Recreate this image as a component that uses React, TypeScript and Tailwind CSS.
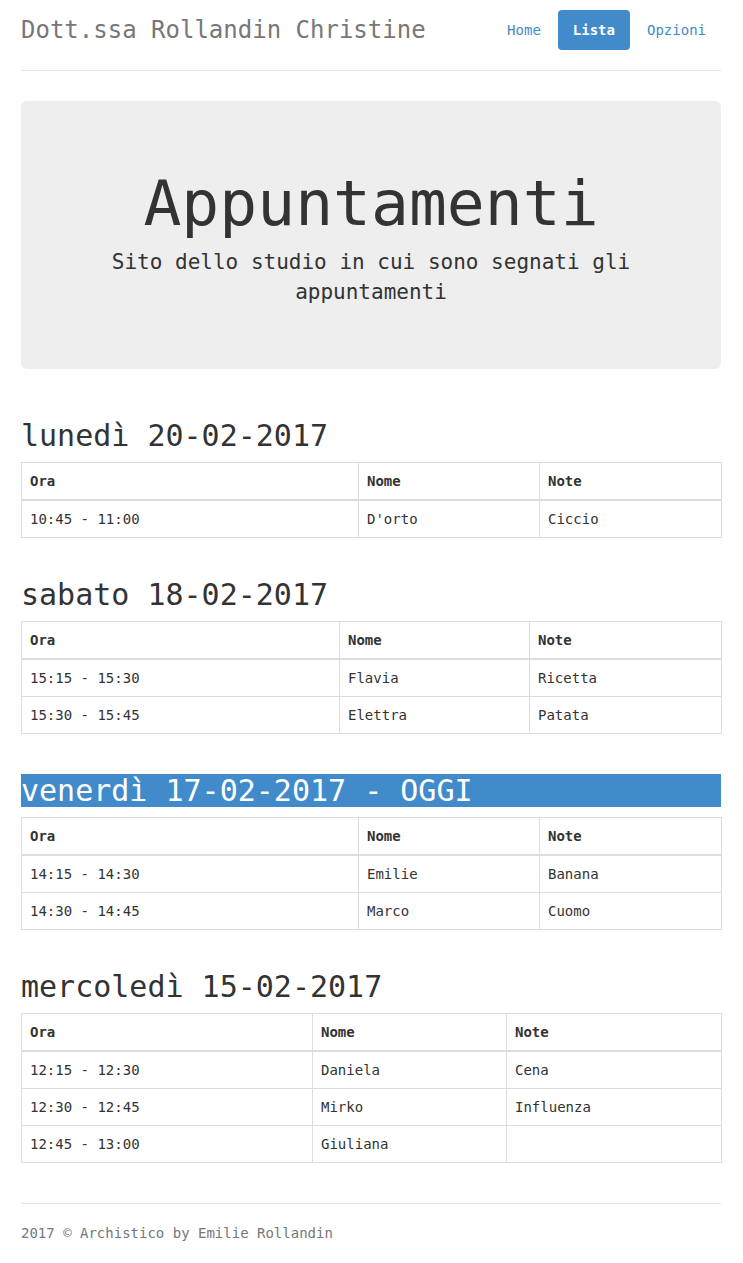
import React from 'react';

type Row = { ora: string; nome: string; note: string };

interface Giorno {
  titolo: string;
  oggi?: boolean;
  cols: [string, string, string];
  righe: Row[];
}

const giorni: Giorno[] = [
  {
    titolo: 'lunedì 20-02-2017',
    cols: ['w-[337px]', 'w-[181px]', 'w-[182px]'],
    righe: [{ ora: '10:45 - 11:00', nome: "D'orto", note: 'Ciccio' }],
  },
  {
    titolo: 'sabato 18-02-2017',
    cols: ['w-[318px]', 'w-[190px]', 'w-[192px]'],
    righe: [
      { ora: '15:15 - 15:30', nome: 'Flavia', note: 'Ricetta' },
      { ora: '15:30 - 15:45', nome: 'Elettra', note: 'Patata' },
    ],
  },
  {
    titolo: 'venerdì 17-02-2017 - OGGI',
    oggi: true,
    cols: ['w-[337px]', 'w-[181px]', 'w-[182px]'],
    righe: [
      { ora: '14:15 - 14:30', nome: 'Emilie', note: 'Banana' },
      { ora: '14:30 - 14:45', nome: 'Marco', note: 'Cuomo' },
    ],
  },
  {
    titolo: 'mercoledì 15-02-2017',
    cols: ['w-[291px]', 'w-[194px]', 'w-[215px]'],
    righe: [
      { ora: '12:15 - 12:30', nome: 'Daniela', note: 'Cena' },
      { ora: '12:30 - 12:45', nome: 'Mirko', note: 'Influenza' },
      { ora: '12:45 - 13:00', nome: 'Giuliana', note: '' },
    ],
  },
];

const Tabella: React.FC<{ giorno: Giorno }> = ({ giorno }) => (
  <section className="flex flex-col pt-5 pb-5">
    <h2
      className={`mb-[10px] text-[30px] leading-[33px] font-medium ${
        giorno.oggi ? 'bg-[#428bca] text-white' : 'text-[#333]'
      }`}
    >
      {giorno.titolo}
    </h2>
    <table className="w-full table-fixed border-collapse border border-[#ddd] text-[14px] leading-5">
      <thead>
        <tr>
          {['Ora', 'Nome', 'Note'].map((h, i) => (
            <th
              key={h}
              className={`${giorno.cols[i]} p-2 text-left font-bold border border-[#ddd] border-b-2`}
            >
              {h}
            </th>
          ))}
        </tr>
      </thead>
      <tbody>
        {giorno.righe.map((r) => (
          <tr key={r.ora}>
            <td className="p-2 border border-[#ddd] h-[37px]">{r.ora}</td>
            <td className="p-2 border border-[#ddd]">{r.nome}</td>
            <td className="p-2 border border-[#ddd]">{r.note}</td>
          </tr>
        ))}
      </tbody>
    </table>
  </section>
);

export default function App() {
  return (
    <div
      className="min-h-[1263px] bg-white text-[#333]"
      style={{ fontFamily: '"DejaVu Sans Mono", "Liberation Mono", monospace' }}
    >
      <div className="w-[700px] ml-[21px] pt-[10px] flex flex-col">
        {/* header */}
        <div className="flex items-center justify-between pb-5 border-b border-[#e5e5e5]">
          <h3 className="text-[24px] leading-10 text-[#777] font-normal">Dott.ssa Rollandin Christine</h3>
          <nav className="flex gap-[2px] text-[14px] leading-5">
            <a className="px-[15px] py-[10px] rounded text-[#428bca]">Home</a>
            <a className="px-[15px] py-[10px] rounded bg-[#428bca] text-white font-bold">Lista</a>
            <a className="px-[15px] py-[10px] rounded text-[#428bca]">Opzioni</a>
          </nav>
        </div>

        {/* jumbotron */}
        <div className="mt-[30px] mb-[30px] bg-[#eeeeee] rounded-md pt-[68px] pb-[62px] px-[30px] text-center">
          <h1 className="text-[63px] leading-[69px] font-normal mb-[10px]">Appuntamenti</h1>
          <p className="text-[21px] leading-[29.5px]">Sito dello studio in cui sono segnati gli appuntamenti</p>
        </div>

        {giorni.map((g) => (
          <Tabella key={g.titolo} giorno={g} />
        ))}

        {/* footer */}
        <footer className="mt-5 pt-[19px] border-t border-[#e5e5e5] text-[#777] text-[14px] leading-5">
          <p>2017 © Archistico by Emilie Rollandin</p>
        </footer>
      </div>
    </div>
  );
}
